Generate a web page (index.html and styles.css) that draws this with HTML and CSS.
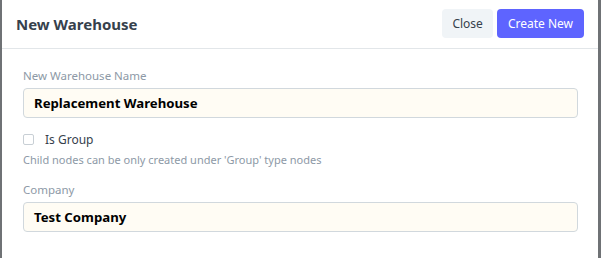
FILE: index.html
```html
<!DOCTYPE html>
<html lang="en">
<head>
  <meta charset="UTF-8">
  <title>New Warehouse</title>
  <link rel="stylesheet" href="styles.css">
</head>
<body>
  <div class="modal">
    <div class="modal-header">
      <h4 class="modal-title">New Warehouse</h4>
      <div class="actions">
        <button class="btn btn-default">Close</button>
        <button class="btn btn-primary">Create New</button>
      </div>
    </div>
    <div class="modal-body">
      <div class="form-group">
        <label class="control-label">New Warehouse Name</label>
        <div class="input-box">Replacement Warehouse</div>
      </div>

      <div class="form-group check-group">
        <label class="checkbox">
          <span class="check-box"></span>
          <span class="check-label">Is Group</span>
        </label>
        <p class="help-box">Child nodes can be only created under 'Group' type nodes</p>
      </div>

      <div class="form-group">
        <label class="control-label">Company</label>
        <div class="input-box">Test Company</div>
      </div>
    </div>
  </div>
</body>
</html>
```

FILE: styles.css
```css
body {
  margin: 0;
  padding: 0;
  height: 258px;
  overflow: hidden;
  background: #6f7275;
  font-family: "Noto Sans", sans-serif;
}

.modal {
  margin-left: 2px;
  width: 596px;
  height: 258px;
  background: #fff;
}

.modal-header {
  display: flex;
  align-items: center;
  justify-content: space-between;
  height: 49px;
  padding: 0 14px;
  border-bottom: 1px solid #e2e6e9;
  box-sizing: border-box;
}

.modal-title {
  margin: 0;
  font-size: 15px;
  font-weight: 700;
  color: #36414c;
}

.actions {
  display: flex;
  gap: 4px;
  margin-top: -2px;
}

.btn {
  height: 29px;
  padding: 0 10px;
  border: none;
  border-radius: 4px;
  font-family: inherit;
  font-size: 12px;
}

.btn-default {
  background: #f0f4f7;
  color: #36414c;
}

.btn-primary {
  background: #5e64ff;
  color: #fff;
  padding: 0 11px;
}

.modal-body {
  padding: 19px 20px 0 21px;
}

.form-group {
  margin-bottom: 11px;
}

.control-label {
  display: block;
  font-size: 11.5px;
  color: #8d99a6;
  margin-bottom: 5px;
}

.input-box {
  height: 30px;
  box-sizing: border-box;
  padding: 0 10px;
  display: flex;
  align-items: center;
  background: #fffcf4;
  border: 1px solid #d1d8dd;
  border-radius: 4px;
  font-size: 13.2px;
  font-weight: 700;
  color: #000;
}

.check-group {
  margin-top: 13px;
  margin-bottom: 15px;
}

.checkbox {
  display: flex;
  align-items: center;
  font-size: 12px;
  color: #36414c;
}

.check-box {
  width: 9px;
  height: 9px;
  border: 1px solid #c8cfd5;
  border-radius: 2px;
  margin-right: 11px;
}

.help-box {
  margin: 4px 0 0;
  font-size: 11px;
  color: #8d99a6;
}
```
